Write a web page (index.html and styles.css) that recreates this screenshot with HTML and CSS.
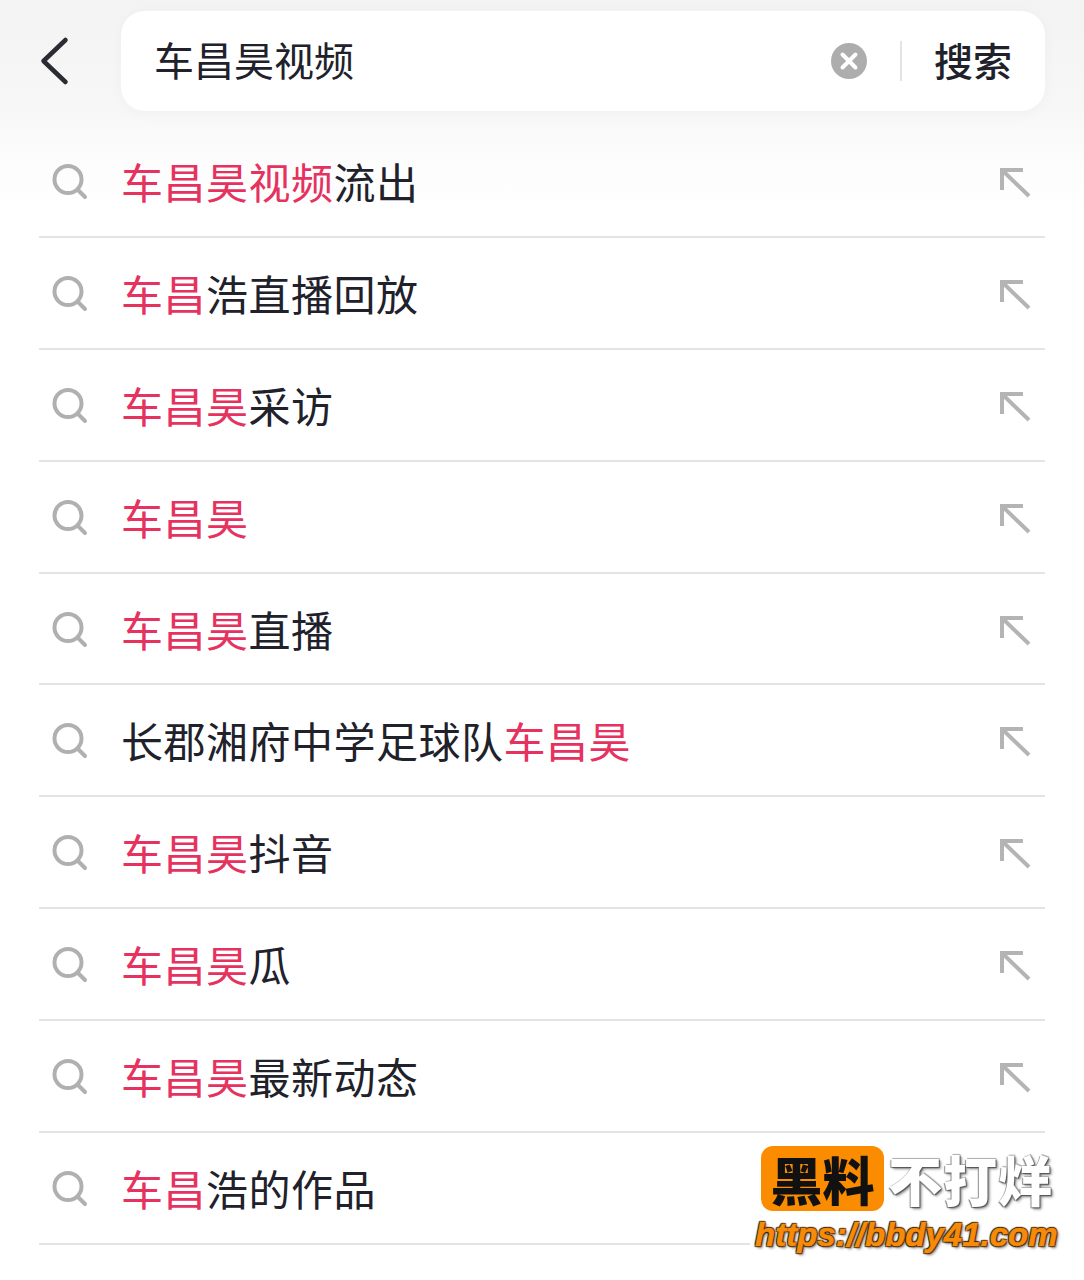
FILE: index.html
```html
<!DOCTYPE html>
<html lang="zh-CN">
<head>
    <meta charset="UTF-8">
    <meta name="viewport" content="width=device-width, initial-scale=1.0">
    <title>搜索</title>
    <link rel="stylesheet" href="styles.css">
</head>
<body>
    <div class="page">
        <header class="top-bar">
            <svg class="back-icon" viewBox="0 0 30 50" width="30" height="50">
                <path d="M26.5 4 L4.5 25 L26.5 46" fill="none" stroke="#2b2c33" stroke-width="4.5" stroke-linecap="round" stroke-linejoin="round"/>
            </svg>
            <div class="search-box">
                <span class="search-text">车昌昊视频</span>
                <svg class="clear-icon" viewBox="0 0 36 36" width="36" height="36">
                    <circle cx="18" cy="18" r="18" fill="#adadad"/>
                    <path d="M11.5 11.5 L24.5 24.5 M24.5 11.5 L11.5 24.5" stroke="#fff" stroke-width="4" stroke-linecap="round"/>
                </svg>
                <span class="divider"></span>
                <span class="search-btn">搜索</span>
            </div>
        </header>

        <ul class="suggest-list">
            <li class="suggest-row">
                <svg class="lens" viewBox="0 0 36 36" width="36" height="36"><circle cx="16" cy="15.500" r="13.500" fill="none" stroke="#b0b0b0" stroke-width="4"/><path d="M25.500 25.500 L33 33" stroke="#b0b0b0" stroke-width="4" stroke-linecap="round"/></svg>
                <span class="label"><em>车昌昊视频</em>流出</span>
                <svg class="fill-arrow" viewBox="0 0 34 34" width="34" height="34"><path d="M2 22 V2 H23 M2 2 L29 28" fill="none" stroke="#b4b4b4" stroke-width="4"/></svg>
            </li>
            <li class="suggest-row">
                <svg class="lens" viewBox="0 0 36 36" width="36" height="36"><circle cx="16" cy="15.500" r="13.500" fill="none" stroke="#b0b0b0" stroke-width="4"/><path d="M25.500 25.500 L33 33" stroke="#b0b0b0" stroke-width="4" stroke-linecap="round"/></svg>
                <span class="label"><em>车昌</em>浩直播回放</span>
                <svg class="fill-arrow" viewBox="0 0 34 34" width="34" height="34"><path d="M2 22 V2 H23 M2 2 L29 28" fill="none" stroke="#b4b4b4" stroke-width="4"/></svg>
            </li>
            <li class="suggest-row">
                <svg class="lens" viewBox="0 0 36 36" width="36" height="36"><circle cx="16" cy="15.500" r="13.500" fill="none" stroke="#b0b0b0" stroke-width="4"/><path d="M25.500 25.500 L33 33" stroke="#b0b0b0" stroke-width="4" stroke-linecap="round"/></svg>
                <span class="label"><em>车昌昊</em>采访</span>
                <svg class="fill-arrow" viewBox="0 0 34 34" width="34" height="34"><path d="M2 22 V2 H23 M2 2 L29 28" fill="none" stroke="#b4b4b4" stroke-width="4"/></svg>
            </li>
            <li class="suggest-row">
                <svg class="lens" viewBox="0 0 36 36" width="36" height="36"><circle cx="16" cy="15.500" r="13.500" fill="none" stroke="#b0b0b0" stroke-width="4"/><path d="M25.500 25.500 L33 33" stroke="#b0b0b0" stroke-width="4" stroke-linecap="round"/></svg>
                <span class="label"><em>车昌昊</em></span>
                <svg class="fill-arrow" viewBox="0 0 34 34" width="34" height="34"><path d="M2 22 V2 H23 M2 2 L29 28" fill="none" stroke="#b4b4b4" stroke-width="4"/></svg>
            </li>
            <li class="suggest-row">
                <svg class="lens" viewBox="0 0 36 36" width="36" height="36"><circle cx="16" cy="15.500" r="13.500" fill="none" stroke="#b0b0b0" stroke-width="4"/><path d="M25.500 25.500 L33 33" stroke="#b0b0b0" stroke-width="4" stroke-linecap="round"/></svg>
                <span class="label"><em>车昌昊</em>直播</span>
                <svg class="fill-arrow" viewBox="0 0 34 34" width="34" height="34"><path d="M2 22 V2 H23 M2 2 L29 28" fill="none" stroke="#b4b4b4" stroke-width="4"/></svg>
            </li>
            <li class="suggest-row">
                <svg class="lens" viewBox="0 0 36 36" width="36" height="36"><circle cx="16" cy="15.500" r="13.500" fill="none" stroke="#b0b0b0" stroke-width="4"/><path d="M25.500 25.500 L33 33" stroke="#b0b0b0" stroke-width="4" stroke-linecap="round"/></svg>
                <span class="label">长郡湘府中学足球队<em>车昌昊</em></span>
                <svg class="fill-arrow" viewBox="0 0 34 34" width="34" height="34"><path d="M2 22 V2 H23 M2 2 L29 28" fill="none" stroke="#b4b4b4" stroke-width="4"/></svg>
            </li>
            <li class="suggest-row">
                <svg class="lens" viewBox="0 0 36 36" width="36" height="36"><circle cx="16" cy="15.500" r="13.500" fill="none" stroke="#b0b0b0" stroke-width="4"/><path d="M25.500 25.500 L33 33" stroke="#b0b0b0" stroke-width="4" stroke-linecap="round"/></svg>
                <span class="label"><em>车昌昊</em>抖音</span>
                <svg class="fill-arrow" viewBox="0 0 34 34" width="34" height="34"><path d="M2 22 V2 H23 M2 2 L29 28" fill="none" stroke="#b4b4b4" stroke-width="4"/></svg>
            </li>
            <li class="suggest-row">
                <svg class="lens" viewBox="0 0 36 36" width="36" height="36"><circle cx="16" cy="15.500" r="13.500" fill="none" stroke="#b0b0b0" stroke-width="4"/><path d="M25.500 25.500 L33 33" stroke="#b0b0b0" stroke-width="4" stroke-linecap="round"/></svg>
                <span class="label"><em>车昌昊</em>瓜</span>
                <svg class="fill-arrow" viewBox="0 0 34 34" width="34" height="34"><path d="M2 22 V2 H23 M2 2 L29 28" fill="none" stroke="#b4b4b4" stroke-width="4"/></svg>
            </li>
            <li class="suggest-row">
                <svg class="lens" viewBox="0 0 36 36" width="36" height="36"><circle cx="16" cy="15.500" r="13.500" fill="none" stroke="#b0b0b0" stroke-width="4"/><path d="M25.500 25.500 L33 33" stroke="#b0b0b0" stroke-width="4" stroke-linecap="round"/></svg>
                <span class="label"><em>车昌昊</em>最新动态</span>
                <svg class="fill-arrow" viewBox="0 0 34 34" width="34" height="34"><path d="M2 22 V2 H23 M2 2 L29 28" fill="none" stroke="#b4b4b4" stroke-width="4"/></svg>
            </li>
            <li class="suggest-row">
                <svg class="lens" viewBox="0 0 36 36" width="36" height="36"><circle cx="16" cy="15.500" r="13.500" fill="none" stroke="#b0b0b0" stroke-width="4"/><path d="M25.500 25.500 L33 33" stroke="#b0b0b0" stroke-width="4" stroke-linecap="round"/></svg>
                <span class="label"><em>车昌</em>浩的作品</span>
            </li>
        </ul>

        <div class="watermark">
            <div class="wm-top">
                <span class="wm-badge">黑料</span>
                <span class="wm-title">不打烊</span>
            </div>
            <div class="wm-url">https://bbdy41.com</div>
        </div>
    </div>
</body>
</html>
```

FILE: styles.css
```css
html, body { margin: 0; padding: 0; background: #fff; }
body { font-family: "Noto Sans CJK SC", "Noto Sans", sans-serif; color: #20212a; }

.page { position: relative; width: 1084px; height: 1280px; overflow: hidden; background: linear-gradient(#f3f3f3 0, #f7f7f7 110px, #fcfcfc 160px, #fff 215px); }

.top-bar { display: flex; align-items: center; height: 122px; padding-right: 39px; box-sizing: border-box; }
.back-icon { margin: 0 0 0 39px; flex: none; }
.search-box { display: flex; align-items: center; flex: 1; height: 100px; margin-left: 52px; padding: 0 33px 0 33px; background: #fff; border-radius: 24px; box-shadow: 0 2px 14px rgba(0, 0, 0, 0.03); }
.search-text { flex: 1; font-size: 40px; line-height: 96px; height: 100px; }
.clear-icon { flex: none; margin-right: -1px; }
.divider { width: 2px; height: 40px; margin: 0 32px 0 34px; background: #e4e4e4; }
.search-btn { font-size: 39px; line-height: 96px; height: 100px; font-weight: 500; }

.suggest-list { list-style: none; margin: 4px 0 0 39px; padding: 0; width: 1006px; }
.suggest-row { display: flex; align-items: center; height: 109.9px; border-bottom: 2px solid #e4e4e4; }
.lens { flex: none; margin: 2px 0 0 13px; }
.label { flex: 1; margin-left: 33px; font-size: 42px; letter-spacing: 0.5px; line-height: 60px; white-space: nowrap; }
.label em { font-style: normal; color: #e5325f; }
.fill-arrow { flex: none; margin: 8px 11px 0 0; }

.watermark { position: absolute; left: 750px; top: 1140px; width: 334px; height: 120px; background: #fff; box-sizing: border-box; padding: 6px 0 0 11px; }
.wm-top { display: flex; align-items: center; }
.wm-badge { width: 123px; height: 65px; background: #fb8c00; border-radius: 12px; color: #111; font-family: "Noto Sans CJK SC", sans-serif; font-weight: 900; font-size: 52px; line-height: 65px; text-align: center; }
.wm-title { margin-left: 4px; font-size: 54px; line-height: 65px; font-weight: 900; color: #fff; letter-spacing: 1px; text-shadow: 1px 1px 1px #555, -1px 1px 1px #888, 1px -1px 1px #aaa, 2px 2px 3px #888; }
.wm-url { margin: 2px 0 0 -6px; font-family: "Liberation Sans", sans-serif; font-weight: 700; font-style: italic; font-size: 33px; line-height: 44px; color: #f68a0a; white-space: nowrap; -webkit-text-stroke: 0.6px #f68a0a; text-shadow: 1px 1px 1px #3a2100, -1px -1px 1px #3a2100, 1px -1px 1px #3a2100, -1px 1px 1px #3a2100, 2px 2px 3px #777; }
```
